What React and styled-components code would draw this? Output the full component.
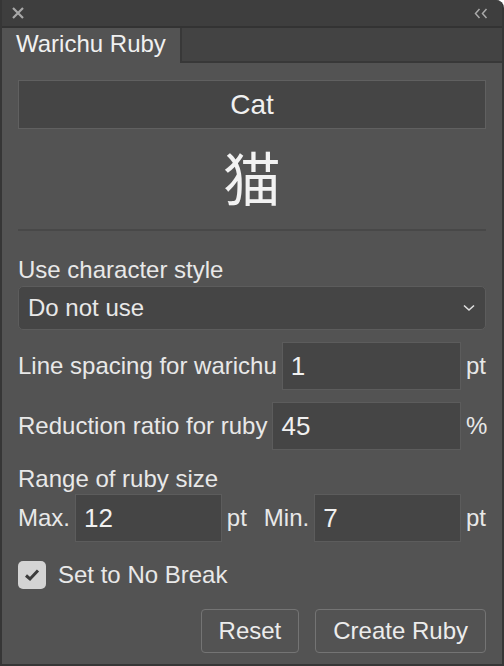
import React from 'react';
import styled, { createGlobalStyle } from 'styled-components';

const GlobalStyle = createGlobalStyle`
  html, body {
    margin: 0;
    padding: 0;
    background: #ffffff;
  }
  body {
    font-family: "Liberation Sans", Arial, "Noto Sans CJK JP", sans-serif;
  }
`;

const Window = styled.div`
  width: 504px;
  height: 666px;
  box-sizing: border-box;
  border: 2px solid #363636;
  border-top: none;
  border-top-right-radius: 8px;
  background: #535353;
  display: flex;
  flex-direction: column;
  overflow: hidden;
  color: #e8e8e8;
`;

const TitleBar = styled.div`
  height: 26px;
  flex-shrink: 0;
  background: #3e3e3e;
  border-bottom: 2px solid #333333;
  display: flex;
  align-items: center;
  justify-content: space-between;
  padding: 0 14px 0 10px;
`;

const TabBar = styled.div`
  height: 35px;
  flex-shrink: 0;
  display: flex;
  background: #434343;
`;

const Tab = styled.div`
  width: 180px;
  box-sizing: border-box;
  padding: 2px 0 0 14px;
  background: #535353;
  border-right: 2px solid #383838;
  font-size: 24px;
  line-height: 28px;
  color: #f0f0f0;
`;

const TabFiller = styled.div`
  flex: 1;
  border-bottom: 2px solid #383838;
`;

const Content = styled.div`
  flex: 1;
  display: flex;
  flex-direction: column;
  padding: 17px 16px 0;
`;

const SourceField = styled.div`
  height: 49px;
  box-sizing: border-box;
  border: 1px solid #606060;
  background: #454545;
  display: flex;
  align-items: center;
  justify-content: center;
  font-size: 28px;
  color: #f0f0f0;
`;

const Kanji = styled.div`
  height: 100px;
  line-height: 94px;
  text-align: center;
  font-size: 58px;
  font-family: "Noto Sans CJK JP", sans-serif;
  color: #f2f2f2;
`;

const Divider = styled.div`
  height: 2px;
  background: #484848;
`;

const SectionLabel = styled.div`
  font-size: 24px;
  line-height: 28px;
  margin-top: ${(p) => p.$top}px;
`;

const Select = styled.div`
  margin-top: 2px;
  height: 44px;
  box-sizing: border-box;
  border: 1px solid #5c5c5c;
  border-radius: 5px;
  background: #454545;
  display: flex;
  align-items: center;
  justify-content: space-between;
  padding: 0 10px 0 9px;
  font-size: 24px;
`;

const Row = styled.div`
  display: flex;
  align-items: center;
  margin-top: ${(p) => p.$top}px;
`;

const Label = styled.span`
  font-size: 24px;
  white-space: nowrap;
  margin-right: 5px;
`;

const Input = styled.div`
  flex: 1 1 0;
  min-width: 0;
  height: 48px;
  box-sizing: border-box;
  border: 1px solid #5c5c5c;
  background: #454545;
  display: flex;
  align-items: center;
  padding-left: 8px;
  font-size: 26px;
  color: #f0f0f0;
`;

const Unit = styled.span`
  width: 25px;
  flex-shrink: 0;
  box-sizing: border-box;
  padding-left: 5px;
  font-size: 24px;
`;

const GroupGap = styled.div`
  width: 17px;
  flex-shrink: 0;
`;

const CheckRow = styled.label`
  display: flex;
  align-items: center;
  gap: 12px;
  margin-top: 19px;
  font-size: 24px;
`;

const CheckBox = styled.span`
  width: 28px;
  height: 28px;
  border-radius: 5px;
  background: #d4d4d4;
  display: flex;
  align-items: center;
  justify-content: center;
`;

const ButtonRow = styled.div`
  display: flex;
  justify-content: flex-end;
  gap: 16px;
  margin-top: 20px;
`;

const Button = styled.button`
  height: 44px;
  padding: 0 17px;
  box-sizing: border-box;
  border: 1px solid #747474;
  border-radius: 4px;
  background: transparent;
  color: #ececec;
  font-family: inherit;
  font-size: 24px;
`;

const App = () => {
  return (
    <>
      <GlobalStyle />
      <Window>
        <TitleBar>
          <svg width="12" height="12" viewBox="0 0 12 12">
            <path d="M1 1L11 11M11 1L1 11" stroke="#a8a8a8" strokeWidth="2.2" />
          </svg>
          <svg width="14" height="11" viewBox="0 0 14 11">
            <path d="M5.5 1L1.5 5.5L5.5 10M12.5 1L8.5 5.5L12.5 10" stroke="#aaaaaa" strokeWidth="1.5" fill="none" />
          </svg>
        </TitleBar>
        <TabBar>
          <Tab>Warichu Ruby</Tab>
          <TabFiller />
        </TabBar>
        <Content>
          <SourceField>Cat</SourceField>
          <Kanji>猫</Kanji>
          <Divider />
          <SectionLabel $top={25}>Use character style</SectionLabel>
          <Select>
            <span>Do not use</span>
            <svg width="12" height="8" viewBox="0 0 12 8">
              <path d="M1 1.5L6 6L11 1.5" stroke="#e0e0e0" strokeWidth="1.6" fill="none" />
            </svg>
          </Select>
          <Row $top={12}>
            <Label>Line spacing for warichu</Label>
            <Input>1</Input>
            <Unit>pt</Unit>
          </Row>
          <Row $top={12}>
            <Label>Reduction ratio for ruby</Label>
            <Input>45</Input>
            <Unit>%</Unit>
          </Row>
          <SectionLabel $top={15}>Range of ruby size</SectionLabel>
          <Row $top={1}>
            <Label>Max.</Label>
            <Input>12</Input>
            <Unit>pt</Unit>
            <GroupGap />
            <Label>Min.</Label>
            <Input>7</Input>
            <Unit>pt</Unit>
          </Row>
          <CheckRow>
            <CheckBox>
              <svg width="16" height="14" viewBox="0 0 16 14">
                <path d="M2 7.5L6 11L14 2.5" stroke="#3c3c3c" strokeWidth="3" fill="none" />
              </svg>
            </CheckBox>
            Set to No Break
          </CheckRow>
          <ButtonRow>
            <Button>Reset</Button>
            <Button>Create Ruby</Button>
          </ButtonRow>
        </Content>
      </Window>
    </>
  );
};

export default App;
